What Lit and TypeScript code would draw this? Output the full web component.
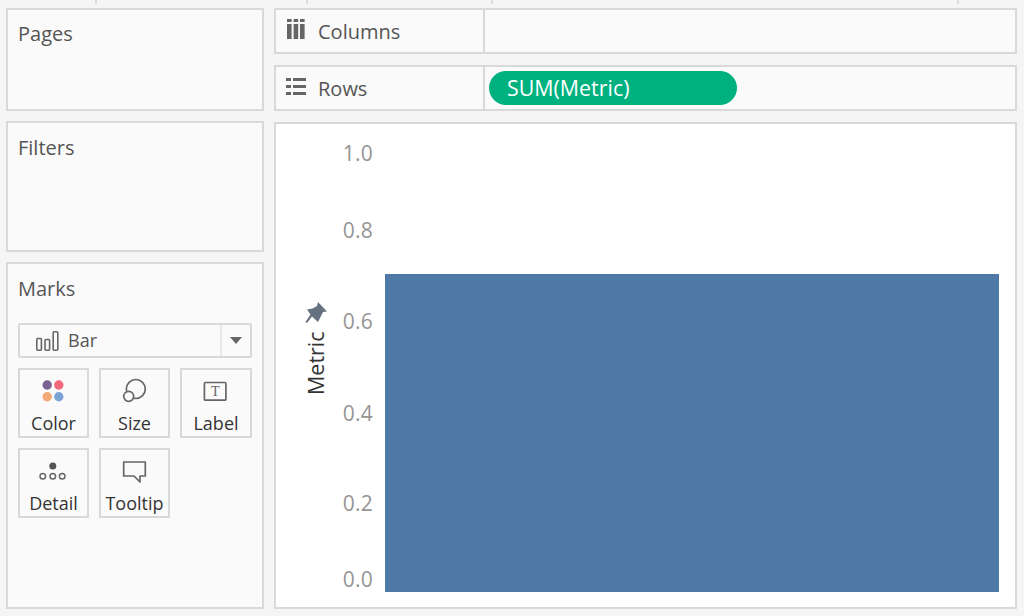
import { LitElement, html, css } from "lit";
import { customElement } from "lit/decorators.js";

@customElement("app-root")
export class AppRoot extends LitElement {
  static styles = css`
    :host { display: block; width: 1024px; height: 616px; background: #f5f5f5; overflow: hidden; font-family: "Open Sans", "Noto Sans", sans-serif; color: #555; }
    .ruler { height: 8px; position: relative; }
    .tick { position: absolute; top: 0; width: 2px; height: 4px; background: #dcdcdc; }
    .main { display: flex; gap: 10px; padding: 0 7px 7px 6px; height: 608px; box-sizing: border-box; }
    .left { width: 258px; display: flex; flex-direction: column; gap: 10px; flex: none; }
    .right { flex: 1; display: flex; flex-direction: column; gap: 11px; min-width: 0; }
    .panel { border: 2px solid #d9d9d9; background: #fafafa; box-sizing: border-box; padding: 10px 10px; font-size: 20px; line-height: 28px; color: #555; }
    .pages { height: 103px; }
    .filters { height: 131px; padding-top: 11px; }
    .marks { flex: 1; padding-top: 11px; }
    .select { margin-top: 20px; height: 35px; width: 234px; box-sizing: border-box; border: 2px solid #d9d9d9; border-radius: 2px; display: flex; align-items: center; background: #fafafa; font-size: 18px; }
    .select-main { flex: 1; display: flex; align-items: center; gap: 9px; padding-left: 16px; height: 100%; }
    .select-main span { position: relative; top: -1px; }
    .select-arrow { width: 28px; height: 100%; border-left: 2px solid #e8e8e8; display: flex; align-items: center; justify-content: center; }
    .cards { margin-top: 10px; display: grid; grid-template-columns: 71px 71px 72px; column-gap: 10px; row-gap: 10px; width: 234px; }
    .card { height: 70px; border: 2px solid #d9d9d9; box-sizing: border-box; display: flex; flex-direction: column; align-items: center; color: #333; font-size: 18px; line-height: 24px; }
    .card svg { height: 26px; width: 28px; margin-top: 9px; margin-bottom: 6px; display: block; overflow: visible; }
    .shelf { height: 46px; border: 2px solid #d9d9d9; background: #fafafa; box-sizing: border-box; display: flex; align-items: center; }
    .shelf-head { width: 209px; height: 100%; box-sizing: border-box; border-right: 2px solid #d9d9d9; display: flex; align-items: center; padding-left: 10px; gap: 12px; font-size: 20px; }
    .shelf-head svg { width: 20px; height: 20px; flex: none; }
    .columns-icon { margin-top: -4px; }
    .pill { margin-left: 4px; width: 248px; height: 34px; border-radius: 17px; background: #00b180; color: #fff; font-size: 21.4px; line-height: 33px; padding-left: 18px; box-sizing: border-box; }
    .chart { flex: 1; border: 2px solid #d9d9d9; background: #fff; position: relative; box-sizing: border-box; }
    .bar { position: absolute; left: 109px; top: 150px; width: 614px; height: 318px; background: #4e79a7; }
    .axis { position: absolute; right: 642px; color: #959595; font-size: 21px; line-height: 26px; letter-spacing: 0.2px; }
    .title { position: absolute; left: 28px; top: 206px; height: 66px; writing-mode: vertical-rl; transform: rotate(180deg); color: #333; font-size: 21.5px; line-height: 24px; text-align: center; }
    .pin { position: absolute; left: 28px; top: 177px; width: 24px; height: 24px; }
  `;

  render() {
    const axis: [string, number][] = [["1.0", 17], ["0.8", 94], ["0.6", 185], ["0.4", 277], ["0.2", 367], ["0.0", 443]];
    return html`
      <div class="ruler">
        ${[95, 306, 491, 957].map((x) => html`<div class="tick" style="left:${x}px"></div>`)}
      </div>
      <div class="main">
        <div class="left">
          <div class="panel pages">Pages</div>
          <div class="panel filters">Filters</div>
          <div class="panel marks">
            Marks
            <div class="select">
              <div class="select-main">
                <svg width="23" height="20" viewBox="0 0 23 20" fill="none" stroke="#666" stroke-width="1.6"><rect x="0.8" y="7.5" width="4.6" height="11.7" rx="1"/><rect x="9" y="8.5" width="4.6" height="10.7" rx="1"/><rect x="17.2" y="0.8" width="4.6" height="18.4" rx="1"/></svg>
                <span>Bar</span>
              </div>
              <div class="select-arrow"><svg width="14" height="8" viewBox="0 0 14 8"><path d="M1 0h12L7 7z" fill="#666"/></svg></div>
            </div>
            <div class="cards">
              <div class="card">
                <svg viewBox="0 0 28 26"><circle cx="7.2" cy="6" r="4.7" fill="#7b6294"/><circle cx="18.8" cy="6" r="4.7" fill="#f4677d"/><circle cx="7.2" cy="17.7" r="4.7" fill="#f2a877"/><circle cx="18.8" cy="17.7" r="4.7" fill="#7ba4d4"/></svg>
                Color
              </div>
              <div class="card">
                <svg viewBox="0 0 28 26" fill="none" stroke="#666" stroke-width="1.7"><circle cx="14.8" cy="10" r="9.5"/><circle cx="7.7" cy="17.3" r="5" fill="#fafafa"/></svg>
                Size
              </div>
              <div class="card">
                <svg viewBox="0 0 28 26" fill="none"><rect x="2.4" y="3.5" width="21.5" height="17.7" rx="1" stroke="#666" stroke-width="1.7"/><text x="13.2" y="17" text-anchor="middle" font-family="Liberation Serif" font-size="14" fill="#666">T</text></svg>
                Label
              </div>
              <div class="card">
                <svg viewBox="0 0 28 26" fill="none" stroke="#666" stroke-width="1.5"><circle cx="12.8" cy="7" r="3.5" fill="#555" stroke="none"/><circle cx="2.8" cy="17.3" r="2.8"/><circle cx="12.8" cy="17.3" r="2.8"/><circle cx="22.2" cy="17.3" r="2.8"/></svg>
                Detail
              </div>
              <div class="card">
                <svg viewBox="0 0 28 26" fill="none" stroke="#666" stroke-width="1.7" stroke-linejoin="round"><path d="M2.7 3H24.3V17H19V23L13 17H2.7z"/></svg>
                Tooltip
              </div>
            </div>
          </div>
        </div>
        <div class="right">
          <div class="shelf">
            <div class="shelf-head">
              <svg class="columns-icon" viewBox="0 0 20 20" fill="#666"><rect x="1" y="5" width="4.6" height="15"/><rect x="7.6" y="5" width="4.6" height="15"/><rect x="14" y="5" width="4.6" height="15"/><rect x="1" y="0" width="4.6" height="3"/><rect x="7.6" y="0" width="4.6" height="3"/><rect x="14" y="0" width="4.6" height="3"/></svg>
              <span>Columns</span>
            </div>
          </div>
          <div class="shelf">
            <div class="shelf-head">
              <svg viewBox="0 0 20 20" fill="#666"><rect x="0" y="0" width="5" height="3"/><rect x="7" y="0" width="13" height="3"/><rect x="0" y="7" width="5" height="3"/><rect x="7" y="7" width="13" height="3"/><rect x="0" y="14" width="5" height="3"/><rect x="7" y="14" width="13" height="3"/></svg>
              <span>Rows</span>
            </div>
            <div class="pill">SUM(Metric)</div>
          </div>
          <div class="chart">
            ${axis.map(([t, y]) => html`<div class="axis" style="top:${y - 1}px">${t}</div>`)}
            <div class="bar"></div>
            <svg class="pin" viewBox="0 0 24 24"><path d="M14 1L23 10.5L19 11L16 17L14 21L8 15.5L3 22L1.5 21L6.5 13.5L3 8.5L8.5 7.5L13 5z" fill="#66717f"/></svg>
            <div class="title">Metric</div>
          </div>
        </div>
      </div>
    `;
  }
}
